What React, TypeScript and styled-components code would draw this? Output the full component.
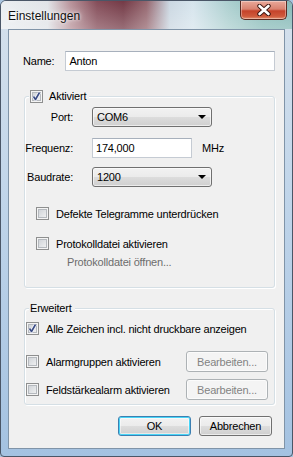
import React from "react";
import styled, { createGlobalStyle } from "styled-components";

const GlobalStyles = createGlobalStyle({
  "html, body": {
    margin: 0,
    padding: 0,
    background: "#a9c4df"
  },
  body: {
    fontFamily: "\"Liberation Sans\", Arial, sans-serif",
    fontSize: 11,
    letterSpacing: "-0.2px",
    color: "#000"
  },
  "*": {
    boxSizing: "border-box"
  }
});

const Window = styled.div({
  width: 293,
  height: 457,
  display: "flex",
  flexDirection: "column",
  border: "1px solid #4a5667",
  borderRadius: "6px 6px 4px 4px",
  overflow: "hidden",
  background: "linear-gradient(to bottom, #d6e1ec 0%, #c2d6ea 40%, #a4c2e1 100%)"
});

const TitleBar = styled.div({
  height: 28,
  flex: "none",
  display: "flex",
  justifyContent: "space-between",
  alignItems: "flex-start",
  background: [
    "linear-gradient(to bottom, rgba(255,255,255,0.05), rgba(255,255,255,0.3))",
    "linear-gradient(to right, #e9edf0 0%, #dfe2e6 16%, #b48c94 24%, #7e4350 33%, #6c2f3c 42%, #8f5e67 50%, #c8d5e0 58%, #d4e3ec 66%, #a8cdcd 78%, #86bab7 90%, #7fb5b3 100%)"
  ].join(", ")
});

const Title = styled.span({
  paddingLeft: 7,
  paddingTop: 8,
  lineHeight: "14px",
  fontSize: 12,
  letterSpacing: 0,
  color: "#101010",
  textShadow: "0 0 6px rgba(255,255,255,0.9), 0 0 3px rgba(255,255,255,0.9)"
});

const CloseButton = styled.div({
  width: 47,
  height: 19,
  marginRight: 5,
  display: "flex",
  alignItems: "center",
  justifyContent: "center",
  border: "1px solid #5b2a22",
  borderTop: "none",
  borderRadius: "0 0 5px 5px",
  background: "linear-gradient(to bottom, #e9a99a 0%, #d98270 45%, #c5432a 55%, #cf5a3c 85%, #e2906f 100%)",
  boxShadow: "inset 0 0 0 1px rgba(255,255,255,0.35)"
});

const Client = styled.div({
  flex: 1,
  margin: "0 7px 7px",
  border: "1px solid #8094a8",
  background: "#f0f0f0",
  padding: "21px 9px 0 15px",
  display: "flex",
  flexDirection: "column"
});

const NameRow = styled.div({
  display: "flex",
  alignItems: "center",
  gap: 11
});

const Label = styled.span<{ $muted?: boolean }>(p => ({
  whiteSpace: "nowrap",
  color: p.$muted ? "#6d6d6d" : "#000"
}));

const TextBox = styled.div<{ $width?: number }>(p => ({
  height: 20,
  width: p.$width ?? "auto",
  flex: p.$width ? "none" : 1,
  display: "flex",
  alignItems: "center",
  padding: "0 3px",
  background: "#fff",
  border: "1px solid #c5cbd3",
  borderTopColor: "#a7b0bc",
  whiteSpace: "nowrap"
}));

const Group = styled.div<{ $top: number; $height: number }>(p => ({
  position: "relative",
  marginTop: p.$top,
  height: p.$height,
  border: "1px solid #d5dfe5",
  borderRadius: 3,
  boxShadow: "inset 1px 1px 0 #fff, 1px 1px 0 #fff"
}));

const Legend = styled.div({
  position: "absolute",
  top: -8,
  left: 4,
  display: "flex",
  alignItems: "center",
  gap: 6,
  padding: "0 3px 0 1px",
  background: "#f0f0f0",
  lineHeight: "15px"
});

const FieldGrid = styled.div({
  display: "grid",
  gridTemplateColumns: "48px auto",
  columnGap: 19,
  alignItems: "center",
  padding: "10px 0 0 0"
});

const FieldLabel = styled.span({
  justifySelf: "end",
  whiteSpace: "nowrap"
});

const FieldSpacer = styled.div<{ $h: number }>(p => ({
  gridColumn: "1 / span 2",
  height: p.$h
}));

const Select = styled.div({
  width: 120,
  height: 20,
  display: "flex",
  alignItems: "center",
  justifyContent: "space-between",
  padding: "0 5px 0 4px",
  border: "1px solid #707070",
  borderRadius: 3,
  background: "linear-gradient(to bottom, #f2f2f2 0%, #ebebeb 50%, #dddddd 50%, #cfcfcf 100%)",
  boxShadow: "inset 0 0 0 1px rgba(255,255,255,0.6)"
});

const Arrow = styled.span({
  width: 0,
  height: 0,
  borderLeft: "4px solid transparent",
  borderRight: "4px solid transparent",
  borderTop: "4px solid #000"
});

const FreqRow = styled.div({
  display: "flex",
  alignItems: "center",
  gap: 10
});

const CheckRow = styled.div<{ $top: number; $left: number }>(p => ({
  display: "flex",
  alignItems: "center",
  gap: 7,
  marginTop: p.$top,
  paddingLeft: p.$left,
  height: 15
}));

const OptionRow = styled.div<{ $top: number }>(p => ({
  display: "flex",
  alignItems: "center",
  justifyContent: "space-between",
  marginTop: p.$top,
  padding: "0 6px 0 1px"
}));

const LinkText = styled.div({
  marginTop: 4,
  paddingLeft: 42,
  color: "#6d6d6d",
  lineHeight: "15px"
});

const Box = styled.span({
  position: "relative",
  width: 13,
  height: 13,
  flex: "none",
  border: "1px solid #8e8f8f",
  background: "linear-gradient(135deg, #c9cdd2 0%, #e4e6e8 60%, #f7f7f7 100%)",
  boxShadow: "inset 0 0 0 1px #f4f4f4, inset 0 0 0 2px #b5b9be"
});

const Button = styled.div<{ $variant?: "default" | "disabled" }>(p => ({
  height: 21,
  display: "flex",
  alignItems: "center",
  justifyContent: "center",
  borderRadius: 3,
  border: `1px solid ${p.$variant === "disabled" ? "#adb2b5" : p.$variant === "default" ? "#3c7fb1" : "#707070"}`,
  color: p.$variant === "disabled" ? "#838383" : "#000",
  background: p.$variant === "disabled"
    ? "#f4f4f4"
    : "linear-gradient(to bottom, #f2f2f2 0%, #ebebeb 50%, #dddddd 50%, #cfcfcf 100%)",
  boxShadow: p.$variant === "default"
    ? "inset 0 0 0 1px #48d5f7, inset 0 0 0 2px rgba(255,255,255,0.5)"
    : "inset 0 0 0 1px rgba(255,255,255,0.6)",
  whiteSpace: "nowrap"
}));

const EditButton = styled(Button)({
  width: 82
});

const DialogButton = styled(Button)({
  width: 73,
  height: 20
});

const Footer = styled.div({
  display: "flex",
  justifyContent: "flex-end",
  gap: 8,
  marginTop: 11,
  paddingRight: 3
});

const CheckBox = ({ checked }: { checked?: boolean }) => (
  <Box>
    {checked && (
      <svg width="11" height="11" viewBox="0 0 11 11" style={{ position: "absolute", left: 0, top: 0 }}>
        <path d="M2.5 5.5 L4.5 8.5 L8.5 1.5" fill="none" stroke="#f8f8ff" strokeWidth="3" strokeLinejoin="round" />
        <path d="M2.5 5.5 L4.5 8.5 L8.5 1.5" fill="none" stroke="#3b4d84" strokeWidth="1.6" strokeLinejoin="round" />
      </svg>
    )}
  </Box>
);

const CloseGlyph = () => (
  <svg width="16" height="12" viewBox="0 0 16 12">
    <path d="M3.5 2 L12.5 10 M12.5 2 L3.5 10" stroke="#3a1510" strokeWidth="4.4" strokeLinecap="round" />
    <path d="M3.5 2 L12.5 10 M12.5 2 L3.5 10" stroke="#ffffff" strokeWidth="2.6" strokeLinecap="round" />
  </svg>
);

export default function App() {
  return (
    <Window>
      <GlobalStyles />
      <TitleBar>
        <Title>Einstellungen</Title>
        <CloseButton><CloseGlyph /></CloseButton>
      </TitleBar>
      <Client>
        <NameRow>
          <Label style={{ marginLeft: -1 }}>Name:</Label>
          <TextBox>Anton</TextBox>
        </NameRow>

        <Group $top={25} $height={192}>
          <Legend>
            <CheckBox checked />
            <Label>Aktiviert</Label>
          </Legend>
          <FieldGrid>
            <FieldLabel>Port:</FieldLabel>
            <Select>COM6<Arrow /></Select>
            <FieldSpacer $h={11} />
            <FieldLabel>Frequenz:</FieldLabel>
            <FreqRow>
              <TextBox $width={100}>174,000</TextBox>
              <Label>MHz</Label>
            </FreqRow>
            <FieldSpacer $h={9} />
            <FieldLabel>Baudrate:</FieldLabel>
            <Select>1200<Arrow /></Select>
          </FieldGrid>
          <CheckRow $top={19} $left={11}>
            <CheckBox />
            <Label>Defekte Telegramme unterdrücken</Label>
          </CheckRow>
          <CheckRow $top={15} $left={11}>
            <CheckBox />
            <Label>Protokolldatei aktivieren</Label>
          </CheckRow>
          <LinkText>Protokolldatei öffnen...</LinkText>
        </Group>

        <Group $top={20} $height={97}>
          <Legend>
            <Label>Erweitert</Label>
          </Legend>
          <CheckRow $top={12} $left={1}>
            <CheckBox checked />
            <Label>Alle Zeichen incl. nicht druckbare anzeigen</Label>
          </CheckRow>
          <OptionRow $top={15}>
            <CheckRow $top={0} $left={0}>
              <CheckBox />
              <Label>Alarmgruppen aktivieren</Label>
            </CheckRow>
            <EditButton $variant="disabled">Bearbeiten...</EditButton>
          </OptionRow>
          <OptionRow $top={7}>
            <CheckRow $top={0} $left={0}>
              <CheckBox />
              <Label>Feldstärkealarm aktivieren</Label>
            </CheckRow>
            <EditButton $variant="disabled">Bearbeiten...</EditButton>
          </OptionRow>
        </Group>

        <Footer>
          <DialogButton $variant="default">OK</DialogButton>
          <DialogButton>Abbrechen</DialogButton>
        </Footer>
      </Client>
    </Window>
  );
}
